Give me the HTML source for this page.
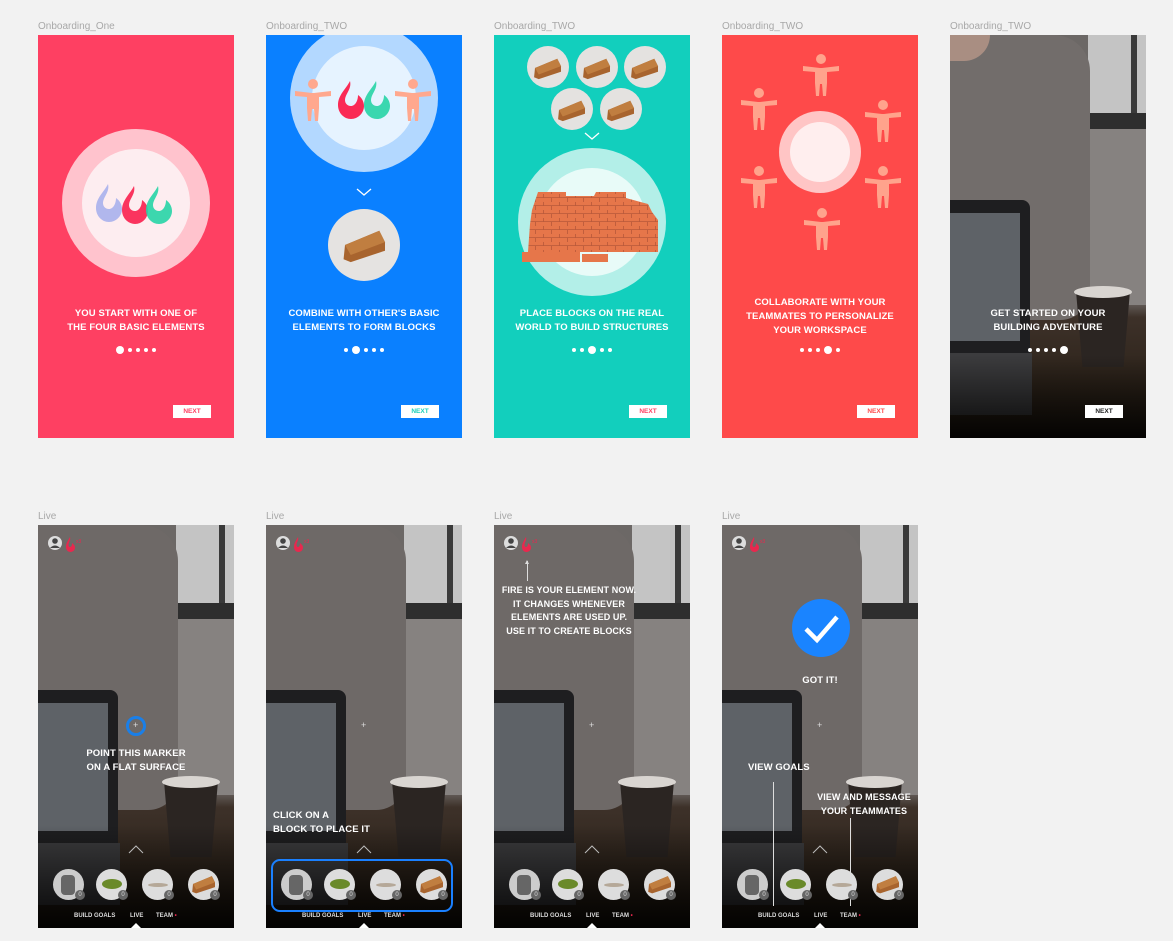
<!DOCTYPE html>
<html><head><meta charset="utf-8"><style>
*{margin:0;padding:0;box-sizing:border-box}
body{width:1173px;height:941px;background:#f2f2f2;position:relative;overflow:hidden;font-family:"Liberation Sans",sans-serif}
.lbl{position:absolute;font-size:10px;color:#a8a8a8}
.ab{position:absolute;width:196px;height:403px;overflow:hidden}
.a{position:absolute}
.t{position:absolute;left:0;width:196px;text-align:center;color:#fff;font-weight:bold;font-size:9.5px;line-height:14px;letter-spacing:.1px}
.dots{position:absolute;left:0;width:196px;top:311px;display:flex;justify-content:center;align-items:center;gap:4px}
.dots i{display:block;width:4px;height:4px;border-radius:50%;background:#fff}
.dots i.b{width:8px;height:8px}
.next{position:absolute;left:135px;top:370px;width:38px;height:13px;background:#fff;font-size:6.5px;font-weight:bold;text-align:center;line-height:13px}
.c{position:absolute;border-radius:50%}
.ph{position:absolute;inset:0;background:linear-gradient(#6c6866 0,#6a6562 66%,#3d3129 70%,#21190f 100%)}
.bk{position:absolute;border-radius:50%;background:#e4e2e0}
.nav{position:absolute;top:388px;font-size:6px;font-weight:bold;color:#ddd}
.win{left:138px;top:0;width:58px;height:78px;background:#c4c4c4}
.swt{left:-10px;top:0;width:150px;height:285px;background:#6e6967;border-radius:0 36px 30px 0}
</style></head><body>

<svg width="0" height="0" style="position:absolute">
<defs>
<g id="pp"><circle cx="19" cy="6" r="5"/><path d="M1 13 L18 15 L20 15 L37 13 L37 18 L25 19 L25 30 L24 43 L21 43 L20 31 L18 31 L17 43 L14 43 L13 30 L13 19 L1 18Z"/></g>
<g id="fl"><path d="M14 0 C10 8 2 14 2 24 C2 32 8 38 15 38 C22 38 28 32 28 25 C28 20 25 16 22 14 C22 20 19 25 15 25 C11 25 9 22 9 19 C9 13 16 8 14 0Z"/></g>
<g id="brick"><path d="M2 14 L26 4 L30 12 L30 18 L6 26 L1 24Z" fill="#a8642e"/><path d="M2 14 L26 4 L30 12 L6 21Z" fill="#c07e40"/></g>
</defs></svg>

<div class="lbl" style="left:38px;top:21px">Onboarding_One</div>
<div class="lbl" style="left:266px;top:21px">Onboarding_TWO</div>
<div class="lbl" style="left:494px;top:21px">Onboarding_TWO</div>
<div class="lbl" style="left:722px;top:21px">Onboarding_TWO</div>
<div class="lbl" style="left:950px;top:21px">Onboarding_TWO</div>
<div class="lbl" style="left:38px;top:511px">Live</div>
<div class="lbl" style="left:266px;top:511px">Live</div>
<div class="lbl" style="left:494px;top:511px">Live</div>
<div class="lbl" style="left:722px;top:511px">Live</div>

<!-- Card 1 -->
<div class="ab" style="left:38px;top:35px;background:#fe4062">
 <div class="c" style="left:24px;top:94px;width:148px;height:148px;background:#ffc3cd"></div>
 <div class="c" style="left:44px;top:114px;width:108px;height:108px;background:#fdedf0"></div>
 <svg class="a" style="left:56px;top:143px" width="84" height="52" viewBox="0 0 84 52">
  <use href="#fl" x="0" y="6" fill="#a9b0ec" opacity=".9"/>
  <use href="#fl" x="26" y="8" fill="#fa2a55" opacity=".95"/>
  <use href="#fl" x="50" y="8" fill="#27d4a6" opacity=".9"/>
 </svg>
 <div class="t" style="top:272px">YOU START WITH ONE OF<br>THE FOUR BASIC ELEMENTS</div>
 <div class="dots"><i class="b"></i><i></i><i></i><i></i><i></i></div>
 <div class="next" style="color:#fe4062">NEXT</div>
</div>

<!-- Card 2 -->
<div class="ab" style="left:266px;top:35px;background:#0a80ff">
 <div class="c" style="left:24px;top:-11px;width:148px;height:148px;background:#b3d8ff"></div>
 <div class="c" style="left:46px;top:11px;width:104px;height:104px;background:#e6f3ff"></div>
 <svg class="a" style="left:28px;top:43px" width="38" height="44" fill="#ffa88e"><use href="#pp"/></svg>
 <svg class="a" style="left:128px;top:43px" width="38" height="44" fill="#ffa88e"><use href="#pp"/></svg>
 <svg class="a" style="left:70px;top:42px" width="60" height="44" viewBox="0 0 60 44">
  <use href="#fl" x="0" y="4" fill="#fa2a55"/><use href="#fl" x="26" y="4" fill="#27d4a6" opacity=".9"/>
 </svg>
 <svg class="a" style="left:90px;top:153px" width="16" height="9"><path d="M1 1 L8 7 L15 1" stroke="#fff" fill="none" stroke-width="1.3"/></svg>
 <div class="c" style="left:62px;top:174px;width:72px;height:72px;background:#e5e3e1"></div>
 <svg class="a" style="left:72px;top:190px" width="54" height="40" viewBox="0 0 32 28"><use href="#brick"/></svg>
 <div class="t" style="top:272px">COMBINE WITH OTHER'S BASIC<br>ELEMENTS TO FORM BLOCKS</div>
 <div class="dots"><i></i><i class="b"></i><i></i><i></i><i></i></div>
 <div class="next" style="color:#1ccfb9">NEXT</div>
</div>

<!-- Card 3 -->
<div class="ab" style="left:494px;top:35px;background:#12cfbd">
 <div class="bk" style="left:33px;top:11px;width:42px;height:42px"></div>
 <div class="bk" style="left:82px;top:11px;width:42px;height:42px"></div>
 <div class="bk" style="left:130px;top:11px;width:42px;height:42px"></div>
 <div class="bk" style="left:57px;top:53px;width:42px;height:42px"></div>
 <div class="bk" style="left:106px;top:53px;width:42px;height:42px"></div>
 <svg class="a" style="left:38px;top:20px" width="32" height="26" viewBox="0 0 32 28"><use href="#brick"/></svg>
 <svg class="a" style="left:87px;top:20px" width="32" height="26" viewBox="0 0 32 28"><use href="#brick"/></svg>
 <svg class="a" style="left:135px;top:20px" width="32" height="26" viewBox="0 0 32 28"><use href="#brick"/></svg>
 <svg class="a" style="left:62px;top:62px" width="32" height="26" viewBox="0 0 32 28"><use href="#brick"/></svg>
 <svg class="a" style="left:111px;top:62px" width="32" height="26" viewBox="0 0 32 28"><use href="#brick"/></svg>
 <svg class="a" style="left:90px;top:97px" width="16" height="9"><path d="M1 1 L8 7 L15 1" stroke="#fff" fill="none" stroke-width="1.3"/></svg>
 <div class="c" style="left:24px;top:113px;width:148px;height:148px;background:#b3efe8"></div>
 <div class="c" style="left:44px;top:133px;width:108px;height:108px;background:#e8fbf8"></div>
 <svg class="a" style="left:26px;top:155px" width="144" height="76" viewBox="0 0 144 76">
  <defs><pattern id="bw" width="16" height="8" patternUnits="userSpaceOnUse"><rect width="16" height="8" fill="#e6764a"/><path d="M0 7.5H16M15.5 0V4M7.5 4V8" stroke="#b8583a" stroke-width=".8"/></pattern></defs>
  <path d="M18 2 L46 2 L46 6 L74 6 L76 2 L106 2 L106 8 L128 14 L132 22 L138 30 L138 62 L8 62 L10 34 L12 20 Z" fill="url(#bw)"/>
  <rect x="2" y="62" width="58" height="10" fill="#e6764a"/><rect x="62" y="64" width="26" height="8" fill="#e6764a"/>
 </svg>
 <div class="t" style="top:272px">PLACE BLOCKS ON THE REAL<br>WORLD TO BUILD STRUCTURES</div>
 <div class="dots"><i></i><i></i><i class="b"></i><i></i><i></i></div>
 <div class="next" style="color:#fe4062">NEXT</div>
</div>

<!-- Card 4 -->
<div class="ab" style="left:722px;top:35px;background:#fe4a4a">
 <div class="c" style="left:57px;top:76px;width:82px;height:82px;background:#ffc5c5"></div>
 <div class="c" style="left:68px;top:87px;width:60px;height:60px;background:#ffeeee"></div>
 <svg class="a" style="left:80px;top:18px" width="38" height="44" fill="#ffa38c"><use href="#pp"/></svg>
 <svg class="a" style="left:18px;top:52px" width="38" height="44" fill="#ffa38c"><use href="#pp"/></svg>
 <svg class="a" style="left:142px;top:64px" width="38" height="44" fill="#ffa38c"><use href="#pp"/></svg>
 <svg class="a" style="left:18px;top:130px" width="38" height="44" fill="#ffa38c"><use href="#pp"/></svg>
 <svg class="a" style="left:142px;top:130px" width="38" height="44" fill="#ffa38c"><use href="#pp"/></svg>
 <svg class="a" style="left:81px;top:172px" width="38" height="44" fill="#ffa38c"><use href="#pp"/></svg>
 <div class="t" style="top:261px">COLLABORATE WITH YOUR<br>TEAMMATES TO PERSONALIZE<br>YOUR WORKSPACE</div>
 <div class="dots"><i></i><i></i><i></i><i class="b"></i><i></i></div>
 <div class="next" style="color:#fe4a4a">NEXT</div>
</div>

<!-- Card 5 -->
<div class="ab" style="left:950px;top:35px">
 <div class="ph"></div>
 <div class="a win"></div>
 <div class="a" style="left:181px;top:0;width:6px;height:78px;background:#3a3a3a"></div>
 <div class="a" style="left:95px;top:78px;width:101px;height:16px;background:#2e2e2e"></div>
 <div class="a" style="left:95px;top:94px;width:101px;height:176px;background:#868280"></div>
 <div class="a swt" style="background:#726d6b"></div>
 <div class="a" style="left:0;top:0;width:40px;height:26px;background:#a98e82;border-radius:0 0 30px 0"></div>
 <div class="a" style="left:0;top:165px;width:80px;height:155px;background:#1e1e20;border-radius:0 8px 0 0"></div>
 <div class="a" style="left:0;top:178px;width:70px;height:128px;background:#5e6267"></div>
 <div class="a" style="left:0;top:318px;width:82px;height:62px;background:#3c3c3e"></div>
 <div class="a" style="left:126px;top:256px;width:54px;height:76px;background:#2b2522;clip-path:polygon(0 0,100% 0,88% 100%,12% 100%)"></div>
 <div class="a" style="left:124px;top:251px;width:58px;height:12px;border-radius:50%;background:#d9d5d1"></div>
 <div class="a" style="left:0;top:320px;width:196px;height:83px;background:linear-gradient(rgba(0,0,0,0),rgba(0,0,0,.85))"></div>
 <div class="t" style="top:272px">GET STARTED ON YOUR<br>BUILDING ADVENTURE</div>
 <div class="dots"><i></i><i></i><i></i><i></i><i class="b"></i></div>
 <div class="next" style="color:#222">NEXT</div>
</div>

<!-- Bottom row -->
<div class="ab" style="left:38px;top:525px">
 <div class="ph"></div>
 <div class="a win"></div>
 <div class="a" style="left:181px;top:0;width:6px;height:78px;background:#3a3a3a"></div>
 <div class="a" style="left:95px;top:78px;width:101px;height:16px;background:#2e2e2e"></div>
 <div class="a" style="left:95px;top:94px;width:101px;height:176px;background:#868280"></div>
 <div class="a swt"></div>
 <div class="a" style="left:0;top:165px;width:80px;height:155px;background:#1e1e20;border-radius:0 8px 0 0"></div>
 <div class="a" style="left:0;top:178px;width:70px;height:128px;background:#5e6267"></div>
 <div class="a" style="left:0;top:318px;width:82px;height:62px;background:#3c3c3e"></div>
 <div class="a" style="left:126px;top:256px;width:54px;height:76px;background:#2b2522;clip-path:polygon(0 0,100% 0,88% 100%,12% 100%)"></div>
 <div class="a" style="left:124px;top:251px;width:58px;height:12px;border-radius:50%;background:#d9d5d1"></div>
 <div class="a" style="left:0;top:300px;width:196px;height:103px;background:linear-gradient(rgba(0,0,0,0),rgba(0,0,0,.9))"></div>
 <svg class="a" style="left:9px;top:10px" width="50" height="18"><circle cx="8" cy="8" r="7" fill="#ddd"/><circle cx="8" cy="6" r="2.8" fill="#444"/><path d="M3 13 Q8 8 13 13" fill="#444"/><path d="M23 2 C20 7 19 9 19 12 C19 15 21 17 23.5 17 C26 17 28 15 28 12.5 C28 10 26 9 25 8 C25 11 24 12 23 12 C22 12 21.5 11 21.5 10 C21.5 7 24 5 23 2Z" fill="#e8284e"/><text x="29" y="8" font-size="5" fill="#e8284e" font-family="Liberation Sans">x3</text></svg>
 <div class="c" style="left:88px;top:191px;width:20px;height:20px;border:3px solid #1a7fe8"></div>
 <div class="a" style="left:95px;top:195px;color:#ddd;font-size:9px">+</div>
 <div class="t" style="top:222px">POINT THIS MARKER<br>ON A FLAT SURFACE</div>
 <svg class="a" style="left:90px;top:320px" width="16" height="9"><path d="M1 8 L8 1 L15 8" stroke="#bbb" fill="none" stroke-width="1"/></svg>
 <div class="bk" style="left:15px;top:344px;width:31px;height:31px;background:#ccc"></div>
 <div class="bk" style="left:58px;top:344px;width:31px;height:31px;background:#ddd"></div>
 <div class="bk" style="left:104px;top:344px;width:31px;height:31px;background:#ddd"></div>
 <div class="bk" style="left:150px;top:344px;width:31px;height:31px;background:#ddd"></div>
 <div class="a" style="left:23px;top:350px;width:14px;height:20px;background:#666;border-radius:4px"></div>
 <div class="a" style="left:64px;top:354px;width:20px;height:10px;background:#6a8a2a;border-radius:50%"></div>
 <div class="a" style="left:110px;top:358px;width:20px;height:4px;background:#b5a898;border-radius:50%"></div>
 <svg class="a" style="left:153px;top:348px" width="26" height="22" viewBox="0 0 32 28"><use href="#brick"/></svg>
 <div class="c" style="left:37px;top:365px;width:10px;height:10px;background:#666;color:#ddd;font-size:6px;text-align:center;line-height:10px">0</div>
 <div class="c" style="left:80px;top:365px;width:10px;height:10px;background:#666;color:#ddd;font-size:6px;text-align:center;line-height:10px">0</div>
 <div class="c" style="left:126px;top:365px;width:10px;height:10px;background:#666;color:#ddd;font-size:6px;text-align:center;line-height:10px">0</div>
 <div class="c" style="left:172px;top:365px;width:10px;height:10px;background:#666;color:#ddd;font-size:6px;text-align:center;line-height:10px">0</div>
 <div class="nav" style="left:36px">BUILD GOALS</div>
 <div class="nav" style="left:92px">LIVE</div>
 <div class="nav" style="left:118px">TEAM<span style="color:#e8284e"> •</span></div>
 <div class="a" style="left:93px;top:398px;width:0;height:0;border-left:5px solid transparent;border-right:5px solid transparent;border-bottom:5px solid #fff"></div>
</div>

<div class="ab" style="left:266px;top:525px">
 <div class="ph"></div>
 <div class="a win"></div>
 <div class="a" style="left:181px;top:0;width:6px;height:78px;background:#3a3a3a"></div>
 <div class="a" style="left:95px;top:78px;width:101px;height:16px;background:#2e2e2e"></div>
 <div class="a" style="left:95px;top:94px;width:101px;height:176px;background:#868280"></div>
 <div class="a swt"></div>
 <div class="a" style="left:0;top:165px;width:80px;height:155px;background:#1e1e20;border-radius:0 8px 0 0"></div>
 <div class="a" style="left:0;top:178px;width:70px;height:128px;background:#5e6267"></div>
 <div class="a" style="left:0;top:318px;width:82px;height:62px;background:#3c3c3e"></div>
 <div class="a" style="left:126px;top:256px;width:54px;height:76px;background:#2b2522;clip-path:polygon(0 0,100% 0,88% 100%,12% 100%)"></div>
 <div class="a" style="left:124px;top:251px;width:58px;height:12px;border-radius:50%;background:#d9d5d1"></div>
 <div class="a" style="left:0;top:300px;width:196px;height:103px;background:linear-gradient(rgba(0,0,0,0),rgba(0,0,0,.9))"></div>
 <svg class="a" style="left:9px;top:10px" width="50" height="18"><circle cx="8" cy="8" r="7" fill="#ddd"/><circle cx="8" cy="6" r="2.8" fill="#444"/><path d="M3 13 Q8 8 13 13" fill="#444"/><path d="M23 2 C20 7 19 9 19 12 C19 15 21 17 23.5 17 C26 17 28 15 28 12.5 C28 10 26 9 25 8 C25 11 24 12 23 12 C22 12 21.5 11 21.5 10 C21.5 7 24 5 23 2Z" fill="#e8284e"/><text x="29" y="8" font-size="5" fill="#e8284e" font-family="Liberation Sans">x3</text></svg>
 <div class="a" style="left:95px;top:195px;color:#ddd;font-size:9px">+</div>
 <div class="t" style="top:284px;left:7px;text-align:left">CLICK ON A<br>BLOCK TO PLACE IT</div>
 <svg class="a" style="left:90px;top:320px" width="16" height="9"><path d="M1 8 L8 1 L15 8" stroke="#bbb" fill="none" stroke-width="1"/></svg>
 <div class="a" style="left:5px;top:334px;width:182px;height:53px;border:2.5px solid #1a80ff;border-radius:9px"></div>
 <div class="bk" style="left:15px;top:344px;width:31px;height:31px;background:#ccc"></div>
 <div class="bk" style="left:58px;top:344px;width:31px;height:31px;background:#ddd"></div>
 <div class="bk" style="left:104px;top:344px;width:31px;height:31px;background:#ddd"></div>
 <div class="bk" style="left:150px;top:344px;width:31px;height:31px;background:#ddd"></div>
 <div class="a" style="left:23px;top:350px;width:14px;height:20px;background:#666;border-radius:4px"></div>
 <div class="a" style="left:64px;top:354px;width:20px;height:10px;background:#6a8a2a;border-radius:50%"></div>
 <div class="a" style="left:110px;top:358px;width:20px;height:4px;background:#b5a898;border-radius:50%"></div>
 <svg class="a" style="left:153px;top:348px" width="26" height="22" viewBox="0 0 32 28"><use href="#brick"/></svg>
 <div class="c" style="left:37px;top:365px;width:10px;height:10px;background:#666;color:#ddd;font-size:6px;text-align:center;line-height:10px">0</div>
 <div class="c" style="left:80px;top:365px;width:10px;height:10px;background:#666;color:#ddd;font-size:6px;text-align:center;line-height:10px">0</div>
 <div class="c" style="left:126px;top:365px;width:10px;height:10px;background:#666;color:#ddd;font-size:6px;text-align:center;line-height:10px">0</div>
 <div class="c" style="left:172px;top:365px;width:10px;height:10px;background:#666;color:#ddd;font-size:6px;text-align:center;line-height:10px">0</div>
 <div class="nav" style="left:36px">BUILD GOALS</div>
 <div class="nav" style="left:92px">LIVE</div>
 <div class="nav" style="left:118px">TEAM<span style="color:#e8284e"> •</span></div>
 <div class="a" style="left:93px;top:398px;width:0;height:0;border-left:5px solid transparent;border-right:5px solid transparent;border-bottom:5px solid #fff"></div>
</div>

<div class="ab" style="left:494px;top:525px">
 <div class="ph"></div>
 <div class="a win"></div>
 <div class="a" style="left:181px;top:0;width:6px;height:78px;background:#3a3a3a"></div>
 <div class="a" style="left:95px;top:78px;width:101px;height:16px;background:#2e2e2e"></div>
 <div class="a" style="left:95px;top:94px;width:101px;height:176px;background:#868280"></div>
 <div class="a swt"></div>
 <div class="a" style="left:0;top:165px;width:80px;height:155px;background:#1e1e20;border-radius:0 8px 0 0"></div>
 <div class="a" style="left:0;top:178px;width:70px;height:128px;background:#5e6267"></div>
 <div class="a" style="left:0;top:318px;width:82px;height:62px;background:#3c3c3e"></div>
 <div class="a" style="left:126px;top:256px;width:54px;height:76px;background:#2b2522;clip-path:polygon(0 0,100% 0,88% 100%,12% 100%)"></div>
 <div class="a" style="left:124px;top:251px;width:58px;height:12px;border-radius:50%;background:#d9d5d1"></div>
 <div class="a" style="left:0;top:300px;width:196px;height:103px;background:linear-gradient(rgba(0,0,0,0),rgba(0,0,0,.9))"></div>
 <svg class="a" style="left:9px;top:10px" width="50" height="18"><circle cx="8" cy="8" r="7" fill="#ddd"/><circle cx="8" cy="6" r="2.8" fill="#444"/><path d="M3 13 Q8 8 13 13" fill="#444"/><path d="M23 2 C20 7 19 9 19 12 C19 15 21 17 23.5 17 C26 17 28 15 28 12.5 C28 10 26 9 25 8 C25 11 24 12 23 12 C22 12 21.5 11 21.5 10 C21.5 7 24 5 23 2Z" fill="#e8284e"/><text x="29" y="8" font-size="5" fill="#e8284e" font-family="Liberation Sans">x3</text></svg>
 <div class="a" style="left:33px;top:36px;width:1px;height:20px;background:#ddd"></div>
 <div class="a" style="left:31px;top:35px;width:0;height:0;border-left:2.5px solid transparent;border-right:2.5px solid transparent;border-bottom:4px solid #ddd"></div>
 <div class="t" style="top:59px;left:-23px;font-size:9px;line-height:13.5px">FIRE IS YOUR ELEMENT NOW.<br>IT CHANGES WHENEVER<br>ELEMENTS ARE USED UP.<br>USE IT TO CREATE BLOCKS</div>
 <div class="a" style="left:95px;top:195px;color:#ddd;font-size:9px">+</div>
 <svg class="a" style="left:90px;top:320px" width="16" height="9"><path d="M1 8 L8 1 L15 8" stroke="#bbb" fill="none" stroke-width="1"/></svg>
 <div class="bk" style="left:15px;top:344px;width:31px;height:31px;background:#ccc"></div>
 <div class="bk" style="left:58px;top:344px;width:31px;height:31px;background:#ddd"></div>
 <div class="bk" style="left:104px;top:344px;width:31px;height:31px;background:#ddd"></div>
 <div class="bk" style="left:150px;top:344px;width:31px;height:31px;background:#ddd"></div>
 <div class="a" style="left:23px;top:350px;width:14px;height:20px;background:#666;border-radius:4px"></div>
 <div class="a" style="left:64px;top:354px;width:20px;height:10px;background:#6a8a2a;border-radius:50%"></div>
 <div class="a" style="left:110px;top:358px;width:20px;height:4px;background:#b5a898;border-radius:50%"></div>
 <svg class="a" style="left:153px;top:348px" width="26" height="22" viewBox="0 0 32 28"><use href="#brick"/></svg>
 <div class="c" style="left:37px;top:365px;width:10px;height:10px;background:#666;color:#ddd;font-size:6px;text-align:center;line-height:10px">0</div>
 <div class="c" style="left:80px;top:365px;width:10px;height:10px;background:#666;color:#ddd;font-size:6px;text-align:center;line-height:10px">0</div>
 <div class="c" style="left:126px;top:365px;width:10px;height:10px;background:#666;color:#ddd;font-size:6px;text-align:center;line-height:10px">0</div>
 <div class="c" style="left:172px;top:365px;width:10px;height:10px;background:#666;color:#ddd;font-size:6px;text-align:center;line-height:10px">0</div>
 <div class="nav" style="left:36px">BUILD GOALS</div>
 <div class="nav" style="left:92px">LIVE</div>
 <div class="nav" style="left:118px">TEAM<span style="color:#e8284e"> •</span></div>
 <div class="a" style="left:93px;top:398px;width:0;height:0;border-left:5px solid transparent;border-right:5px solid transparent;border-bottom:5px solid #fff"></div>
</div>

<div class="ab" style="left:722px;top:525px">
 <div class="ph"></div>
 <div class="a win"></div>
 <div class="a" style="left:181px;top:0;width:6px;height:78px;background:#3a3a3a"></div>
 <div class="a" style="left:95px;top:78px;width:101px;height:16px;background:#2e2e2e"></div>
 <div class="a" style="left:95px;top:94px;width:101px;height:176px;background:#868280"></div>
 <div class="a swt"></div>
 <div class="a" style="left:0;top:165px;width:80px;height:155px;background:#1e1e20;border-radius:0 8px 0 0"></div>
 <div class="a" style="left:0;top:178px;width:70px;height:128px;background:#5e6267"></div>
 <div class="a" style="left:0;top:318px;width:82px;height:62px;background:#3c3c3e"></div>
 <div class="a" style="left:126px;top:256px;width:54px;height:76px;background:#2b2522;clip-path:polygon(0 0,100% 0,88% 100%,12% 100%)"></div>
 <div class="a" style="left:124px;top:251px;width:58px;height:12px;border-radius:50%;background:#d9d5d1"></div>
 <div class="a" style="left:0;top:300px;width:196px;height:103px;background:linear-gradient(rgba(0,0,0,0),rgba(0,0,0,.9))"></div>
 <svg class="a" style="left:9px;top:10px" width="50" height="18"><circle cx="8" cy="8" r="7" fill="#ddd"/><circle cx="8" cy="6" r="2.8" fill="#444"/><path d="M3 13 Q8 8 13 13" fill="#444"/><path d="M23 2 C20 7 19 9 19 12 C19 15 21 17 23.5 17 C26 17 28 15 28 12.5 C28 10 26 9 25 8 C25 11 24 12 23 12 C22 12 21.5 11 21.5 10 C21.5 7 24 5 23 2Z" fill="#e8284e"/><text x="29" y="8" font-size="5" fill="#e8284e" font-family="Liberation Sans">x3</text></svg>
 <svg class="a" style="left:70px;top:74px" width="58" height="58"><circle cx="29" cy="29" r="29" fill="#1a84ff"/><path d="M14 30 L25 41 L45 18" stroke="#fff" stroke-width="4.5" fill="none"/></svg>
 <div class="t" style="top:149px">GOT IT!</div>
 <div class="a" style="left:95px;top:195px;color:#ddd;font-size:9px">+</div>
 <div class="t" style="top:236px;left:26px;width:90px;text-align:left;white-space:nowrap">VIEW GOALS</div>
 <div class="a" style="left:51px;top:257px;width:1px;height:124px;background:#ddd"></div>
 <div class="t" style="top:266px;left:92px;width:100px;font-size:9px;line-height:13.5px">VIEW AND MESSAGE<br>YOUR TEAMMATES</div>
 <div class="a" style="left:128px;top:293px;width:1px;height:88px;background:#ddd"></div>
 <svg class="a" style="left:90px;top:320px" width="16" height="9"><path d="M1 8 L8 1 L15 8" stroke="#bbb" fill="none" stroke-width="1"/></svg>
 <div class="bk" style="left:15px;top:344px;width:31px;height:31px;background:#ccc"></div>
 <div class="bk" style="left:58px;top:344px;width:31px;height:31px;background:#ddd"></div>
 <div class="bk" style="left:104px;top:344px;width:31px;height:31px;background:#ddd"></div>
 <div class="bk" style="left:150px;top:344px;width:31px;height:31px;background:#ddd"></div>
 <div class="a" style="left:23px;top:350px;width:14px;height:20px;background:#666;border-radius:4px"></div>
 <div class="a" style="left:64px;top:354px;width:20px;height:10px;background:#6a8a2a;border-radius:50%"></div>
 <div class="a" style="left:110px;top:358px;width:20px;height:4px;background:#b5a898;border-radius:50%"></div>
 <svg class="a" style="left:153px;top:348px" width="26" height="22" viewBox="0 0 32 28"><use href="#brick"/></svg>
 <div class="c" style="left:37px;top:365px;width:10px;height:10px;background:#666;color:#ddd;font-size:6px;text-align:center;line-height:10px">0</div>
 <div class="c" style="left:80px;top:365px;width:10px;height:10px;background:#666;color:#ddd;font-size:6px;text-align:center;line-height:10px">0</div>
 <div class="c" style="left:126px;top:365px;width:10px;height:10px;background:#666;color:#ddd;font-size:6px;text-align:center;line-height:10px">0</div>
 <div class="c" style="left:172px;top:365px;width:10px;height:10px;background:#666;color:#ddd;font-size:6px;text-align:center;line-height:10px">0</div>
 <div class="nav" style="left:36px">BUILD GOALS</div>
 <div class="nav" style="left:92px">LIVE</div>
 <div class="nav" style="left:118px">TEAM<span style="color:#e8284e"> •</span></div>
 <div class="a" style="left:93px;top:398px;width:0;height:0;border-left:5px solid transparent;border-right:5px solid transparent;border-bottom:5px solid #fff"></div>
</div>

</body></html>
